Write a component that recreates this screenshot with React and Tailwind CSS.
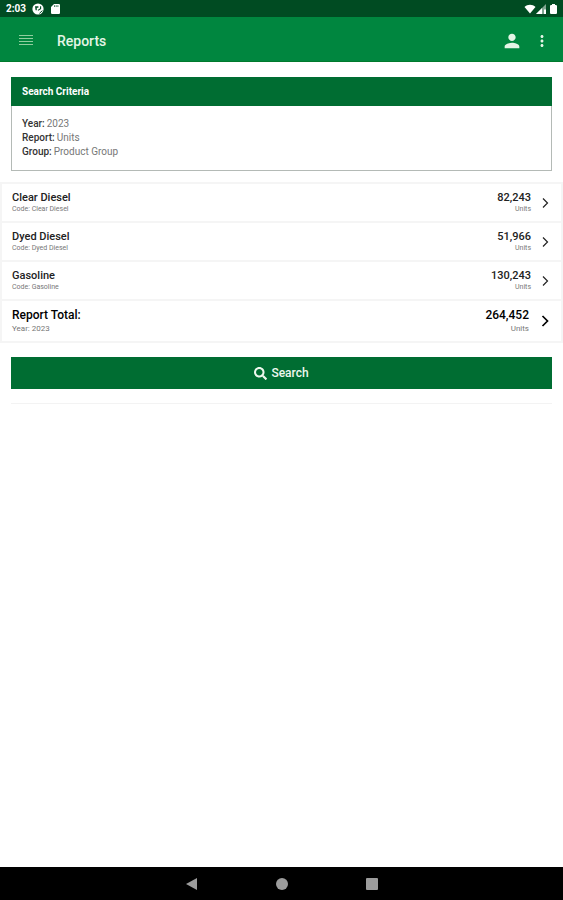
import { FaSearch } from 'react-icons/fa';
import { MdPerson, MdMoreVert } from 'react-icons/md';

const CRITERIA = [
  { label: 'Year', value: '2023' },
  { label: 'Report', value: 'Units' },
  { label: 'Group', value: 'Product Group' },
];

const ROWS = [
  { name: 'Clear Diesel', code: 'Code: Clear Diesel', amount: '82,243' },
  { name: 'Dyed Diesel', code: 'Code: Dyed Diesel', amount: '51,966' },
  { name: 'Gasoline', code: 'Code: Gasoline', amount: '130,243' },
];

function StatusBar() {
  return (
    <div className="flex h-[17px] items-center justify-between bg-[#004b22] px-1.5 pt-px text-white">
      <div className="flex items-center">
        <span className="text-[10px] font-bold leading-4">2:03</span>
        <svg className="ml-1.5 h-3 w-3" viewBox="0 0 12 12">
          <circle cx="6" cy="6" r="5.6" fill="#fff" />
          <path d="M3 3.200h3.400v1.600H4.800v2.400H3.600z" fill="#004b22" />
          <path d="M8.600 3.200v2.400L6 7.400" fill="none" stroke="#004b22" strokeWidth="1.1" />
          <path d="M7.400 10.400 10.400 7.600" stroke="#004b22" strokeWidth="1" />
        </svg>
        <svg className="ml-[7px] h-2.5 w-[9px]" viewBox="0 0 9 10">
          <path d="M3 0h5.200l.8.8v8.400l-.8.8H.8L0 9.200V3z" fill="#fff" />
          <path d="M3.500 1.200v1.800M5.200 1.200v1.800M6.900 1.200v1.800" stroke="#004b22" strokeWidth=".7" />
        </svg>
      </div>
      <div className="flex items-center">
        <svg className="h-2.5 w-3" viewBox="0 0 12 10" fill="currentColor">
          <path d="M6 9.500.5 3C2 1.500 4 .8 6 .8s4 .7 5.500 2.200z" />
        </svg>
        <svg className="h-2.5 w-2.5" viewBox="0 0 10 10" fill="currentColor">
          <path d="M0 10 10 0v10z" opacity=".5" />
          <path d="M0 10 6 4v6zM8 5.500h2V10H8z" />
        </svg>
        <svg className="ml-1 h-2.5 w-[7px]" viewBox="0 0 7 10" fill="currentColor">
          <path d="M2 0h3v1h1.200l.8.8V9.200l-.8.8H.8L0 9.200V1.800L.8 1H2z" />
        </svg>
      </div>
    </div>
  );
}

function AppBar() {
  return (
    <header className="flex h-[45px] items-center border-b border-[#007a2c] bg-[#00863f] pl-[18px] pr-3 pt-[3px] text-[#e4f5e6]">
      <button type="button" aria-label="Menu" className="h-4 w-4">
        <svg viewBox="0 0 16 16" className="h-4 w-4" stroke="#8fce9e" strokeWidth="1.2">
          <path d="M1 2.500h14M1 5.500h14M1 8.500h14M1 11.500h14" />
        </svg>
      </button>
      <h1 className="ml-[23px] flex-1 text-sm font-medium">Reports</h1>
      <button type="button" aria-label="Account">
        <MdPerson className="h-[22px] w-[22px]" />
      </button>
      <button type="button" aria-label="More options" className="ml-2.5">
        <MdMoreVert className="h-[18px] w-[18px]" />
      </button>
    </header>
  );
}

function Chevron({ bold = false }) {
  return (
    <svg
      className="h-3 w-2"
      viewBox="0 0 8 12"
      fill="none"
      stroke="currentColor"
      strokeWidth={bold ? 1.7 : 1.2}
    >
      <path d={bold ? 'M1.500 1 6.500 6l-5 5' : 'M2 1.500 6.500 6 2 10.500'} />
    </svg>
  );
}

function ReportRow({ name, code, amount }) {
  return (
    <li className="border-b-2 border-[#f5f5f5]">
      <button type="button" className="flex h-[37px] w-full items-center pl-2.5 pr-3 text-left text-[#222]">
        <span className="flex-1">
          <span className="block text-[11px] font-medium leading-[13px]">{name}</span>
          <span className="block text-[7px] leading-[11px] text-[#777]">{code}</span>
        </span>
        <span className="mr-2.5 text-right">
          <span className="block text-[11px] font-medium leading-[13px]">{amount}</span>
          <span className="block text-[7px] leading-[11px] text-[#777]">Units</span>
        </span>
        <Chevron />
      </button>
    </li>
  );
}

function NavBar() {
  return (
    <nav className="flex h-[33px] items-center justify-center gap-[78px] bg-black text-[#9c9c9c]">
      <button type="button" aria-label="Back">
        <svg className="h-3 w-3" viewBox="0 0 12 12" fill="currentColor">
          <path d="M11 0v12L0 6z" />
        </svg>
      </button>
      <button type="button" aria-label="Home" className="h-3 w-3 rounded-full bg-[#9c9c9c]" />
      <button type="button" aria-label="Recent apps" className="h-3 w-3 rounded-[1px] bg-[#9c9c9c]" />
    </nav>
  );
}

export default function App() {
  return (
    <div className="flex min-h-screen flex-col bg-white font-[Roboto,sans-serif]">
      <StatusBar />
      <AppBar />

      <main className="flex-1">
        <section className="mx-[11px] mt-[15px] border border-[#b4bab6]">
          <h2 className="-mx-px -mt-px bg-[#006d32] px-[11px] text-[10px] font-bold leading-[29px] text-white">
            Search Criteria
          </h2>
          <dl className="px-2.5 pb-[11px] pt-[11px] text-[10px] leading-[14px]">
            {CRITERIA.map((item) => (
              <div key={item.label} className="flex gap-0.5">
                <dt className="font-medium text-[#333]">{item.label}:</dt>
                <dd className="text-[#777]">{item.value}</dd>
              </div>
            ))}
          </dl>
        </section>

        <ul className="mt-[11px] border-x-2 border-t-2 border-[#f5f5f5]">
          {ROWS.map((row) => (
            <ReportRow key={row.name} {...row} />
          ))}
          {/* Total */}
          <li className="border-b-2 border-[#f5f5f5]">
            <button type="button" className="flex h-10 w-full items-center pl-2.5 pr-3 text-left text-black">
              <span className="flex-1">
                <span className="block text-xs font-medium leading-[14px]">Report Total:</span>
                <span className="block text-[8px] leading-[13px] text-[#777]">Year: 2023</span>
              </span>
              <span className="mr-3 text-right">
                <span className="block text-xs font-medium leading-[14px]">264,452</span>
                <span className="block text-[8px] leading-[13px] text-[#777]">Units</span>
              </span>
              <Chevron bold />
            </button>
          </li>
        </ul>

        <div className="mx-[11px] mt-3.5">
          <button
            type="button"
            className="flex h-8 w-full items-center justify-center gap-1 bg-[#006d32] text-xs font-medium text-[#eef8ee]"
          >
            <FaSearch className="h-[13px] w-[13px]" />
            Search
          </button>
          <hr className="mt-3.5 border-[#f3f3f3]" />
        </div>
      </main>

      <NavBar />
    </div>
  );
}
